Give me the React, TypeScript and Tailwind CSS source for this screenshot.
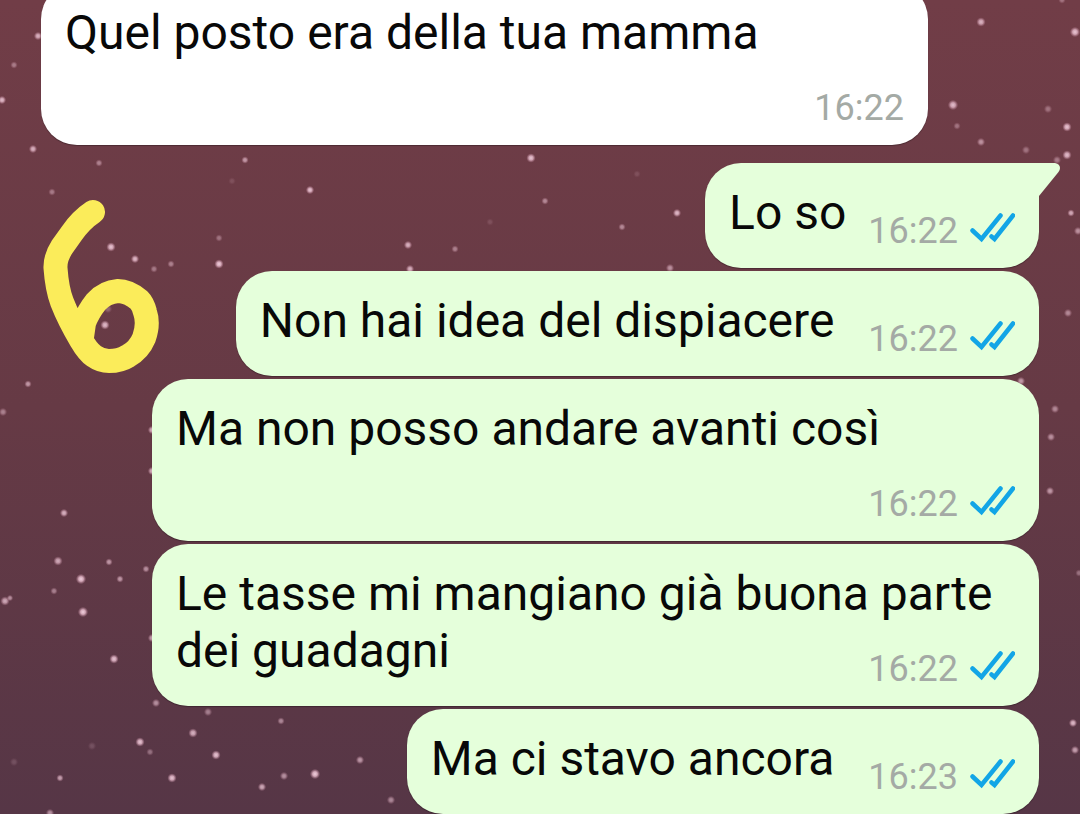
type Message = {
  text: string;
  time: string;
  own: boolean;
  first?: boolean;
};

const messages: Message[] = [
  { text: "Quel posto era della tua mamma", time: "16:22", own: false },
  { text: "Lo so", time: "16:22", own: true, first: true },
  { text: "Non hai idea del dispiacere", time: "16:22", own: true },
  { text: "Ma non posso andare avanti così", time: "16:22", own: true },
  { text: "Le tasse mi mangiano già buona parte dei guadagni", time: "16:22", own: true },
  { text: "Ma ci stavo ancora", time: "16:23", own: true },
];

// x, y, radius, opacity
const stars: [number, number, number, number][] = [
  [38, 36, 3, 0.8], [14, 65, 2.5, 0.45], [2, 100, 3, 0.85], [33, 149, 3, 0.8],
  [99, 163, 2.5, 0.5], [245, 160, 2.5, 0.65], [52, 192, 2.5, 0.45], [310, 190, 3, 0.9],
  [111, 247, 3.5, 0.9], [135, 259, 3, 0.85], [154, 269, 2.5, 0.45], [171, 264, 2.5, 0.5],
  [219, 238, 2.5, 0.4], [219, 264, 3.5, 0.95], [105, 325, 3.5, 0.85], [108, 309, 3, 0.3],
  [28, 384, 2.5, 0.65], [531, 158, 3.5, 0.9], [545, 201, 2.5, 0.55], [677, 213, 3, 0.85],
  [622, 227, 2.5, 0.55], [408, 245, 3, 0.8], [410, 269, 3, 0.8], [455, 249, 2.5, 0.5],
  [670, 268, 3, 0.6], [637, 174, 2.5, 0.15], [490, 222, 2.5, 0.15], [232, 181, 2.5, 0.15],
  [3, 412, 3, 0.5], [152, 430, 3, 0.8], [152, 471, 3, 0.8], [64, 513, 3, 0.8],
  [58, 561, 3.5, 0.75], [81, 579, 4, 0.95], [54, 591, 2.5, 0.5], [83, 612, 4, 0.95],
  [5, 601, 3.5, 0.75], [10, 598, 2, 0.6], [109, 562, 2.5, 0.65], [146, 569, 2.5, 0.6],
  [120, 579, 2.5, 0.65], [114, 659, 3.5, 0.9], [152, 638, 3, 0.7], [156, 703, 3, 0.6],
  [208, 712, 3, 0.5], [193, 733, 3.5, 0.8], [140, 742, 3.5, 0.9], [150, 752, 2.5, 0.4],
  [216, 755, 3.5, 0.9], [172, 778, 3.5, 0.9], [60, 778, 2.5, 0.7], [50, 813, 3, 0.6],
  [14, 762, 3, 0.18], [92, 746, 3, 0.18], [281, 721, 2.5, 0.55], [262, 787, 3, 0.75],
  [284, 776, 3, 0.6], [315, 774, 4, 0.95], [360, 760, 3, 0.65], [391, 800, 3, 0.55],
  [981, 22, 3.5, 0.8], [1075, 32, 4, 0.9], [953, 105, 4, 0.85], [957, 126, 2.5, 0.4],
  [981, 142, 3, 0.6], [1048, 109, 3, 0.4], [1067, 127, 3.5, 0.9], [1067, 155, 3.5, 0.85],
  [1026, 150, 3, 0.4], [1057, 160, 3, 0.45], [1071, 213, 2.5, 0.75], [1078, 231, 3, 0.6],
  [1068, 313, 3, 0.55], [1021, 381, 3, 0.65], [1055, 409, 3, 0.55], [1051, 437, 3, 0.6],
  [1050, 491, 3, 0.65], [1079, 573, 2.5, 0.4], [1073, 723, 3, 0.85], [1075, 750, 3, 0.7],
  [1062, 0, 2.5, 0.4],
];

function StarrySky() {
  return (
    <svg
      className="absolute inset-0 h-full w-full"
      viewBox="0 0 1080 814"
      preserveAspectRatio="xMidYMid slice"
      aria-hidden="true"
    >
      <defs>
        <radialGradient id="star">
          <stop offset="0" stopColor="#f8d8e6" />
          <stop offset="0.45" stopColor="#eec2d3" stopOpacity="0.85" />
          <stop offset="1" stopColor="#c98ea4" stopOpacity="0" />
        </radialGradient>
      </defs>
      {stars.map(([x, y, r, o]) => (
        <circle key={`${x}-${y}`} cx={x} cy={y} r={r + 1.2} fill="url(#star)" opacity={o} />
      ))}
    </svg>
  );
}

function HandDrawnSix() {
  return (
    <svg
      className="absolute left-0 top-[180px]"
      width="200"
      height="210"
      viewBox="0 180 200 210"
      fill="none"
      stroke="#fbec5a"
      strokeWidth="24"
      strokeLinecap="round"
      strokeLinejoin="round"
      role="img"
      aria-label="6"
    >
      <path d="M93 212 Q81 220 72 233 L62 247 Q55 258 55.5 268 Q57 289 62 302 Q69 320 81 340 Q88 352 94 356 Q101 361 109 361 Q120 361 128 356 Q139 350 144 338 Q149 324 145 312 Q143 304 139 300 Q128 291 118 291 Q105 292 96 302 Q88 312 84 323 L82 337" />
    </svg>
  );
}

function ReadTicks() {
  return (
    <svg
      className="ml-3 shrink-0"
      width="45"
      height="42"
      viewBox="0 0 45 42"
      fill="none"
      stroke="#12a5e6"
      strokeWidth="4.5"
      strokeLinecap="round"
      role="img"
      aria-label="Letto"
    >
      <path d="M2.5 20.5 11.5 29 30.5 5.5" />
      <path d="M21.5 26.500 24.5 29 43 5.5" />
    </svg>
  );
}

function Tail() {
  return (
    <svg
      className="absolute left-full top-0"
      width="22"
      height="34"
      viewBox="0 0 22 34"
      aria-hidden="true"
    >
      <path d="M0 0H16Q21 1 21 5Q21 7 19.5 9L0 33Z" fill="#e5ffdb" />
    </svg>
  );
}

function metaGap({ own, first }: Message) {
  if (!own) return "ml-16";
  return first ? "ml-[22px]" : "ml-[34px]";
}

function Bubble({ message }: { message: Message }) {
  const { text, time, own, first } = message;
  return (
    <li
      className={`relative flow-root max-w-[calc(100%-111px)] px-6 pb-4 pt-[21px] shadow-[0_1px_1px_rgba(0,0,0,0.3)] ${
        own ? "self-end bg-[#e5ffdb]" : "mb-[15px] self-start bg-white"
      } ${first ? "rounded-b-[36px] rounded-tl-[36px]" : "rounded-[36px]"}`}
    >
      <span className="text-[48px] leading-[57px] text-[#080808]">{text}</span>
      <span
        className={`float-right mt-[26px] flex text-[36px] leading-[42px] text-[#a4aaa5] ${metaGap(message)}`}
      >
        <time>{time}</time>
        {own && <ReadTicks />}
      </span>
      {first && <Tail />}
    </li>
  );
}

export default function App() {
  return (
    <main className="relative flex h-screen flex-col justify-end overflow-hidden bg-linear-to-b from-[#713d47] via-[#663a45] to-[#563646] font-[Roboto,sans-serif]">
      <StarrySky />
      <ul className="relative flex shrink-0 flex-col gap-[3px] px-[41px]">
        {messages.map((message) => (
          <Bubble key={message.text} message={message} />
        ))}
      </ul>
      <HandDrawnSix />
    </main>
  );
}
